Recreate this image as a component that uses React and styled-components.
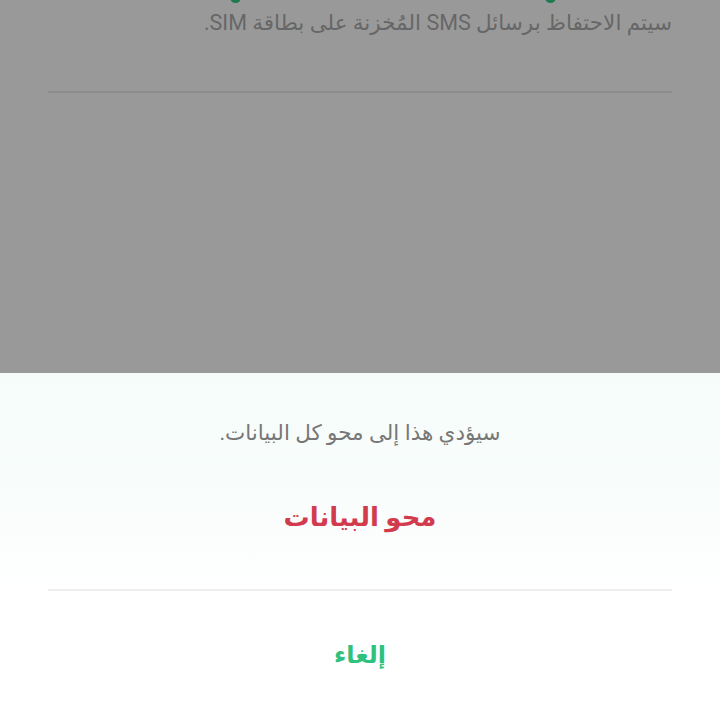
import React from "react";
import styled, { createGlobalStyle } from "styled-components";

const Global = createGlobalStyle`
  html, body { margin: 0; padding: 0; }
  body { font-family: Roboto, "DejaVu Sans", sans-serif; }
`;

const Screen = styled.div`
  width: 720px;
  height: 720px;
  display: flex;
  flex-direction: column;
  overflow: hidden;
  direction: rtl;
`;

const Backdrop = styled.div`
  height: 373px;
  background: #999999;
  padding: 0 48px;
  display: flex;
  flex-direction: column;
`;

const DotRow = styled.div`
  height: 4px;
  display: flex;
  overflow: hidden;
`;

const Dot = styled.span`
  width: 11px;
  height: 11px;
  border-radius: 50%;
  background: #1f7a4d;
  margin-top: -8px;
  margin-right: ${(p) => p.$offset}px;
`;

const Note = styled.p`
  margin: 2px 0 0;
  font-size: 21.5px;
  line-height: 34px;
  color: #676767;
  text-align: right;
`;

const Rule = styled.hr`
  margin: 0;
  border: none;
  height: 2px;
  background: ${(p) => p.$color};
  margin-top: ${(p) => p.$top}px;
`;

const Sheet = styled.div`
  flex: 1;
  background: linear-gradient(to bottom, #f6fcfa 0px, #f8fdfb 100px, #fdfefe 190px, #ffffff 220px);
  display: flex;
  flex-direction: column;
  padding: 0 48px;
`;

const Message = styled.p`
  margin: 45px 0 0;
  text-align: center;
  font-size: 21.5px;
  line-height: 30px;
  color: #777777;
`;

const Action = styled.button`
  border: none;
  background: none;
  font-family: inherit;
  font-weight: bold;
  font-size: ${(p) => p.$size}px;
  color: ${(p) => p.$color};
  height: ${(p) => p.$h}px;
  padding: 0;
  display: flex;
  align-items: center;
  justify-content: center;
  margin-top: ${(p) => p.$top}px;
`;

export default function App() {
  return (
    <>
      <Global />
      <Screen>
        <Backdrop>
          <DotRow>
            <Dot $offset={116} />
            <Dot $offset={304} />
          </DotRow>
          <Note>سيتم الاحتفاظ برسائل SMS المُخزنة على بطاقة SIM.</Note>
          <Rule $color="#8c8c8c" $top={51} />
        </Backdrop>
        <Sheet>
          <Message>سيؤدي هذا إلى محو كل البيانات.</Message>
          <Action $size={26} $color="#d23b4e" $h={60} $top={39}>محو البيانات</Action>
          <Rule $color="#eeeeee" $top={42} />
          <Action $size={24} $color="#2ec27e" $h={60} $top={34}>إلغاء</Action>
        </Sheet>
      </Screen>
    </>
  );
}
